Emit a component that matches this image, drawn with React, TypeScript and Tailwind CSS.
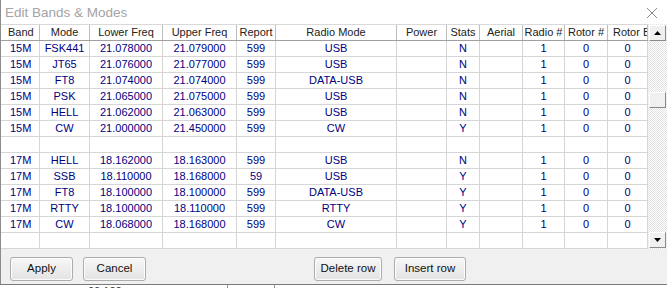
import React from "react";

type Col = { h: string; w: string; head: string; cell: string };

const cols: Col[] = [
  { h: "Band", w: "w-[39px]", head: "justify-start pl-[7px]", cell: "justify-start pl-[9px]" },
  { h: "Mode", w: "w-[50px]", head: "justify-center", cell: "justify-center" },
  { h: "Lower Freq", w: "w-[73px]", head: "justify-center", cell: "justify-center" },
  { h: "Upper Freq", w: "w-[74px]", head: "justify-center", cell: "justify-center" },
  { h: "Report", w: "w-[39px]", head: "justify-center", cell: "justify-center" },
  { h: "Radio Mode", w: "w-[121px]", head: "justify-center", cell: "justify-center" },
  { h: "Power", w: "w-[50px]", head: "justify-center", cell: "justify-center" },
  { h: "Stats", w: "w-[33px]", head: "justify-center", cell: "justify-center" },
  { h: "Aerial", w: "w-[43px]", head: "justify-center", cell: "justify-center" },
  { h: "Radio #", w: "w-[42px]", head: "justify-center", cell: "justify-center" },
  { h: "Rotor #", w: "w-[43px]", head: "justify-center", cell: "justify-center" },
  { h: "Rotor Bearing", w: "w-[40px]", head: "justify-start pl-[5px]", cell: "justify-center" },
];

const rows: string[][] = [
  ["15M", "FSK441", "21.078000", "21.079000", "599", "USB", "", "N", "", "1", "0", "0"],
  ["15M", "JT65", "21.076000", "21.077000", "599", "USB", "", "N", "", "1", "0", "0"],
  ["15M", "FT8", "21.074000", "21.074000", "599", "DATA-USB", "", "N", "", "1", "0", "0"],
  ["15M", "PSK", "21.065000", "21.075000", "599", "USB", "", "N", "", "1", "0", "0"],
  ["15M", "HELL", "21.062000", "21.063000", "599", "USB", "", "N", "", "1", "0", "0"],
  ["15M", "CW", "21.000000", "21.450000", "599", "CW", "", "Y", "", "1", "0", "0"],
  ["", "", "", "", "", "", "", "", "", "", "", ""],
  ["17M", "HELL", "18.162000", "18.163000", "599", "USB", "", "N", "", "1", "0", "0"],
  ["17M", "SSB", "18.110000", "18.168000", "59", "USB", "", "Y", "", "1", "0", "0"],
  ["17M", "FT8", "18.100000", "18.100000", "599", "DATA-USB", "", "Y", "", "1", "0", "0"],
  ["17M", "RTTY", "18.100000", "18.110000", "599", "RTTY", "", "Y", "", "1", "0", "0"],
  ["17M", "CW", "18.068000", "18.168000", "599", "CW", "", "Y", "", "1", "0", "0"],
  ["", "", "", "", "", "", "", "", "", "", "", ""],
];

function Btn({ label, w }: { label: string; w: string }) {
  return (
    <div
      className={`${w} h-[24px] flex items-center justify-center rounded-[3px] border border-[#adadad] bg-gradient-to-b from-[#f7f7f7] to-[#e3e3e3] text-[11.5px] text-[#111] shadow-[inset_0_0_0_1px_#fcfcfc]`}
    >
      {label}
    </div>
  );
}

function SbBox({ up }: { up: boolean }) {
  return (
    <div className="w-[17px] h-[16px] flex items-center justify-center bg-[#f0f0f0] border-t border-l border-t-[#ffffff] border-l-[#ffffff] border-b border-r border-b-[#8a8a8a] border-r-[#8a8a8a]">
      <svg width="7" height="4" viewBox="0 0 7 4">
        {up ? <path d="M3.5 0 L7 4 L0 4 Z" fill="#000" /> : <path d="M0 0 L7 0 L3.5 4 Z" fill="#000" />}
      </svg>
    </div>
  );
}

export default function App() {
  return (
    <div
      className="w-[667px] h-[288px] flex flex-col bg-[#f0f0f0] overflow-hidden"
      style={{ fontFamily: '"Liberation Sans", Arial, sans-serif' }}
    >
      <div className="flex-1 flex flex-col border-l border-l-[#8c8c8c]">
        {/* title bar */}
        <div className="h-[24px] bg-white flex items-center justify-between pl-[4px] pr-[9px]">
          <span className="text-[13.5px] text-[#a3a3a3] leading-none pt-[1px]">Edit Bands &amp; Modes</span>
          <svg width="12" height="12" viewBox="0 0 12 12" className="mt-[2px]">
            <path d="M1 1 L11 11 M11 1 L1 11" stroke="#8a8a8a" strokeWidth="1" />
          </svg>
        </div>
        {/* grid */}
        <div className="h-[226px] flex">
          <div className="flex flex-col bg-white">
            <div className="h-[17px] flex border-t border-t-[#d9d9d9] border-b border-b-[#a0a0a0] bg-white">
              {cols.map((c) => (
                <div
                  key={c.h}
                  className={`${c.w} ${c.head} shrink-0 flex items-center border-r border-r-[#bdbdbd] text-[11px] text-[#222] whitespace-nowrap overflow-hidden`}
                >
                  {c.h}
                </div>
              ))}
            </div>
            {rows.map((r, i) => (
              <div key={i} className="h-[16px] flex border-b border-b-[#d6d6d6]">
                {cols.map((c, j) => (
                  <div
                    key={j}
                    className={`${c.w} ${c.cell} shrink-0 flex items-center border-r border-r-[#d6d6d6] text-[11px] text-[#000080] whitespace-nowrap overflow-hidden`}
                  >
                    {r[j]}
                  </div>
                ))}
              </div>
            ))}
            <div className="flex-1 bg-[#f0f0f0]" />
          </div>
          <div className="w-[19px] h-[225px] flex flex-col items-end pr-[1px] bg-[repeating-conic-gradient(#ffffff_0%_25%,#e2e2e2_0%_50%)] bg-[length:2px_2px]">
            <div className="mt-[1px]">
              <SbBox up />
            </div>
            <div className="mt-[51px] w-[17px] h-[16px] bg-[#f0f0f0] border-t border-l border-t-[#ffffff] border-l-[#ffffff] border-b border-r border-b-[#8a8a8a] border-r-[#8a8a8a]" />
            <div className="mt-auto mb-[1px]">
              <SbBox up={false} />
            </div>
          </div>
        </div>
        {/* buttons */}
        <div className="flex-1 flex items-start pt-[7px] pl-[9px]">
          <Btn label="Apply" w="w-[63px]" />
          <div className="ml-[10px]">
            <Btn label="Cancel" w="w-[63px]" />
          </div>
          <div className="ml-[168px]">
            <Btn label="Delete row" w="w-[68px]" />
          </div>
          <div className="ml-[12px]">
            <Btn label="Insert row" w="w-[72px]" />
          </div>
        </div>
      </div>
      {/* bottom edge of background window */}
      <div className="h-[4px] border-t border-t-[#7a7a7a] bg-white overflow-hidden flex">
        <div className="w-[88px] shrink-0" />
        <span className="text-[11px] leading-none text-[#333] mt-[1px]">00.122</span>
        <div className="ml-[105px] w-px h-[3px] bg-[#9a9a9a]" />
        <div className="ml-[46px] w-px h-[3px] bg-[#9a9a9a]" />
      </div>
    </div>
  );
}
